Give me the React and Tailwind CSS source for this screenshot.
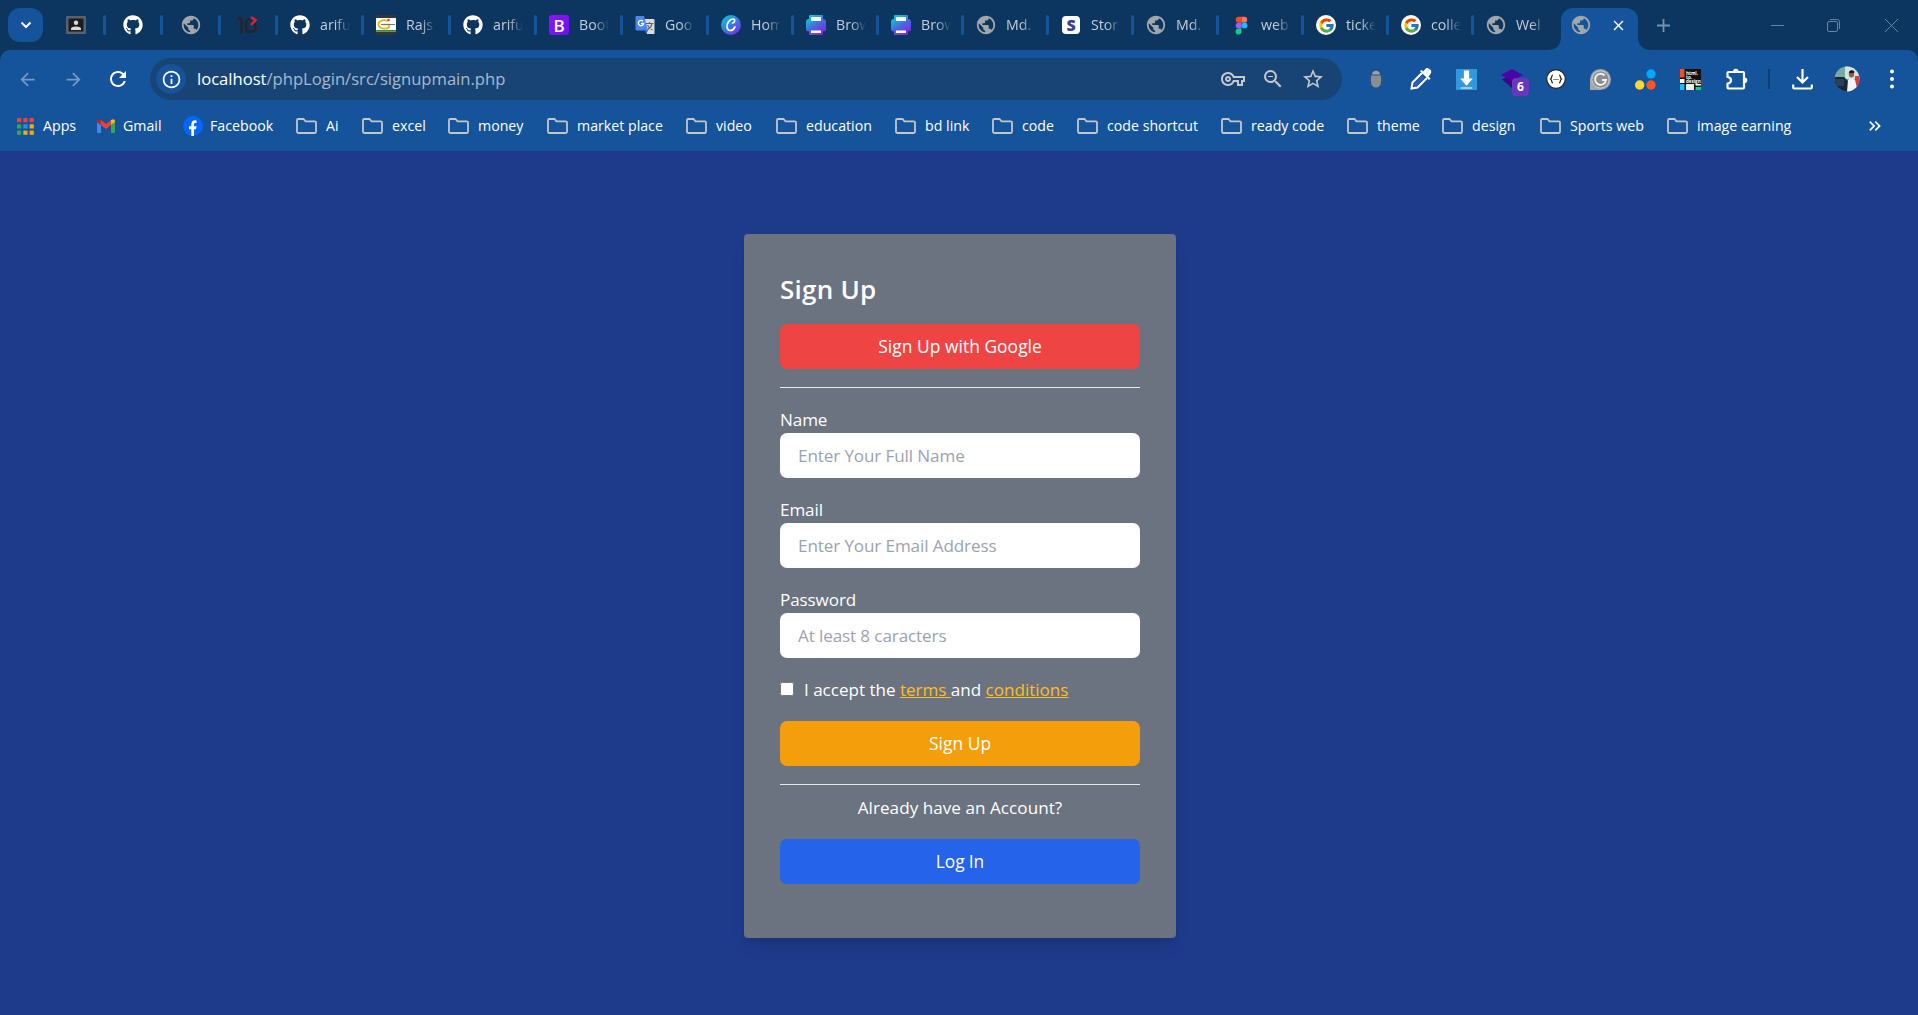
import React from "react";
import { FaGithub } from "react-icons/fa";
import { MdArrowBack, MdArrowForward, MdRefresh, MdOutlineInfo, MdPublic, MdOutlineVpnKey, MdZoomOut, MdStarOutline, MdClose, MdKeyboardDoubleArrowRight } from "react-icons/md";
import { FcGoogle } from "react-icons/fc";

const Globe = () => <MdPublic className="size-[22px] -m-px text-[#a1a6ab]" />;

const Github = () => <FaGithub className="size-5 text-white" />;

const Contact = () => (
  <svg viewBox="0 0 20 18" className="w-5 h-[18px]">
    <rect width="20" height="18" rx="1" fill="#5c6167" />
    <rect x="2.5" y="2.5" width="15" height="13" fill="#1b1d1f" />
    <circle cx="10" cy="6.7" r="2.2" fill="#d8d8d8" />
    <path d="M5 14v-1.2c0-3 10-3 10 0V14z" fill="#d8d8d8" />
  </svg>
);

const Ten = () => (
  <svg viewBox="0 0 20 20" className="size-5" fill="none">
    <path d="M0 3.500h3.500V18M12 3.500C8 5 8 7 8 9.500v4c0 4.500 9.500 4.500 9.500 0v-1.500c0-2-1.500-3.500-3-3.500" stroke="#242528" strokeWidth="2.600" />
    <path d="M13 2l4.500 3-4.500 5" stroke="#e8202d" strokeWidth="2.400" />
  </svg>
);

const Rajshahi = () => (
  <svg viewBox="0 0 20 20" className="size-5">
    <rect width="20" height="20" fill="#333638" />
    <rect y="3" width="20" height="13.500" fill="#fff" />
    <path d="M0 15h20v1.500H0z" fill="#2f8a3c" />
    <path d="M12 6C7 4 2 6 2.500 10s7 4.500 10.500 2.500V9.500H7" fill="none" stroke="#e3b516" strokeWidth="1.700" />
    <path d="M5 9.500h14" stroke="#777" strokeWidth="1" />
    <circle cx="12.500" cy="5" r="1.300" fill="#dd392c" />
  </svg>
);

const Bootstrap = () => (
  <span className="flex size-5 items-center justify-center rounded-[3px] bg-linear-to-br from-[#9013fe] to-[#6610f2] text-[17px] leading-none font-semibold text-white">B</span>
);

const Translate = () => (
  <svg viewBox="0 0 20 20" className="size-5">
    <path d="M8 4h10.500a1 1 0 0 1 1 1v14H12z" fill="#dcdcdc" />
    <path d="M10.500 8.500h8M14.500 7v1.500M17 9c-.8 3-2.500 4.500-5 6M12.500 10c1 2.500 2.500 4 5 5" stroke="#5d6468" strokeWidth="1.100" fill="none" />
    <path d="M1.500 1H9l4 14.500H1.500a1 1 0 0 1-1-1V2a1 1 0 0 1 1-1z" fill="#4a86ee" />
    <path d="M9.500 15.500h3.500L11 19z" fill="#2b57c4" />
    <path d="M8 6.200A2.700 2.700 0 1 0 8.700 8.500H6" stroke="#fff" strokeWidth="1.300" fill="none" />
  </svg>
);

const Canva = () => (
  <svg viewBox="0 0 20 20" className="size-5">
    <defs>
      <linearGradient id="canva" x1="0" y1="0" x2=".8" y2="1">
        <stop offset=".1" stopColor="#08c5cc" /><stop offset=".55" stopColor="#3c78e5" /><stop offset="1" stopColor="#7d2ae8" />
      </linearGradient>
    </defs>
    <circle cx="10" cy="10" r="10" fill="url(#canva)" />
    <path d="M11.500 8c2.500-.5 3-4 .5-4-3.500 0-6.500 4.500-6 8.200.6 4.500 5.500 4.300 8-.2" fill="none" stroke="#fff" strokeWidth="1.700" strokeLinecap="round" />
  </svg>
);

const Printer = () => (
  <svg viewBox="0 0 20 20" className="size-5">
    <defs>
      <linearGradient id="printer" x1=".1" y1="0" x2=".75" y2="1">
        <stop offset=".15" stopColor="#0fc4cd" /><stop offset=".55" stopColor="#4a67e4" /><stop offset="1" stopColor="#8a22e2" />
      </linearGradient>
    </defs>
    <path d="M4 0h12a1 1 0 0 1 1 1v3q3 0 3 3v7q0 2.500-3 2.500V19a1 1 0 0 1-1 1H4a1 1 0 0 1-1-1v-2.500Q0 16.500 0 14V7q0-3 3-3V1a1 1 0 0 1 1-1z" fill="url(#printer)" />
    <path d="M5 2h10v4H5zM5 15.500h10V18H5z" fill="#fff" />
  </svg>
);

const StorySet = () => (
  <span className="flex size-[18px] items-center justify-center rounded-[4px] bg-white text-[16px] leading-none font-extrabold text-[#3f3d9b]">S</span>
);

const Figma = () => (
  <svg viewBox="0 0 14 20" className="h-[19px] w-[13px]">
    <path d="M7 .5H4a3.200 3.200 0 0 0 0 6.400h3z" fill="#f24e1e" />
    <path d="M7 .5h3a3.200 3.200 0 0 1 0 6.400H7z" fill="#ff7262" />
    <path d="M7 6.900H4a3.200 3.200 0 0 0 0 6.400h3z" fill="#a259ff" />
    <circle cx="10.200" cy="10.100" r="3.200" fill="#1abcfe" />
    <path d="M7 13.300H4a3.200 3.200 0 1 0 3 3.200z" fill="#0acf83" />
  </svg>
);

const Google = () => (
  <span className="flex size-5 items-center justify-center rounded-full bg-white"><FcGoogle className="size-[17px]" /></span>
);

const pinned = [
  { icon: <Contact />, w: "w-[63px]" },
  { icon: <Github />, w: "w-[57px]" },
  { icon: <Globe />, w: "w-[58px]" },
  { icon: <Ten />, w: "w-[57px]" },
];

const tabs = [
  { icon: <Github />, label: "arifu", w: "w-[86px]" },
  { icon: <Rajshahi />, label: "Rajs", w: "w-[87px]" },
  { icon: <Github />, label: "arifu", w: "w-[86px]" },
  { icon: <Bootstrap />, label: "Boot", w: "w-[86px]" },
  { icon: <Translate />, label: "Goo", w: "w-[86px]" },
  { icon: <Canva />, label: "Hom", w: "w-[85px]" },
  { icon: <Printer />, label: "Brow", w: "w-[85px]" },
  { icon: <Printer />, label: "Brow", w: "w-[85px]" },
  { icon: <Globe />, label: "Md.", w: "w-[85px]" },
  { icon: <StorySet />, label: "Stor", w: "w-[85px]" },
  { icon: <Globe />, label: "Md.", w: "w-[85px]" },
  { icon: <Figma />, label: "web", w: "w-[85px]" },
  { icon: <Google />, label: "ticke", w: "w-[85px]" },
  { icon: <Google />, label: "colle", w: "w-[85px]" },
  { icon: <Globe />, label: "Wel", w: "w-[87px]", last: true },
];

const Divider = () => <span className="h-5 w-[3px] shrink-0 rounded-full bg-[#15539a]" />;

function TabStrip() {
  return (
    <div className="flex h-[50px] items-center bg-[#0c355f]">
      <div className="ml-2 flex h-[34px] w-[35px] shrink-0 items-center justify-center rounded-xl bg-[#15539a]">
        <svg viewBox="0 0 12 8" className="h-2 w-3" fill="none" stroke="#fff" strokeWidth="2"><path d="M1.500 1.500 6 6l4.500-4.500" /></svg>
      </div>
      {pinned.map((t, i) => (
        <div key={i} className={`flex shrink-0 items-center justify-end ${t.w}`}>
          <span className="mr-[17.500px] flex w-5 justify-center">{t.icon}</span>
          <Divider />
        </div>
      ))}
      {tabs.map((t, i) => (
        <div key={i} className={`flex shrink-0 items-center ${t.w}`}>
          <span className="ml-[12px] flex w-5 shrink-0 justify-center">{t.icon}</span>
          <span className="ml-[10px] w-[30px] shrink-0 overflow-hidden mask-r-from-50% mask-r-to-100% text-[14.200px] leading-5 whitespace-nowrap text-[#c3cedb]">{t.label}</span>
          {!t.last && <span className="ml-auto flex"><Divider /></span>}
        </div>
      ))}
      <div className="relative flex h-[42px] w-[77px] shrink-0 items-center self-end rounded-t-[12px] bg-[#15539a]">
        <svg viewBox="0 0 14 14" className="absolute bottom-0 -left-3.5 size-3.5"><path d="M14 0v14H0Q14 14 14 0z" fill="#15539a" /></svg>
        <svg viewBox="0 0 14 14" className="absolute -right-3.5 bottom-0 size-3.5"><path d="M0 0v14h14Q0 14 0 0z" fill="#15539a" /></svg>
        <span className="mb-1.5 ml-[10px] flex w-5 -translate-y-px justify-center"><Globe /></span>
        <MdClose className="mb-1.5 ml-[19px] size-[17px] -translate-y-px text-white" />
      </div>
      <svg viewBox="0 0 13 13" className="ml-[19px] size-[13px] shrink-0" stroke="#7892ae" strokeWidth="1.800"><path d="M6.500 0v13M0 6.500h13" /></svg>
      <svg viewBox="0 0 13 13" className="ml-auto size-[13px] shrink-0" stroke="#6785a6" fill="none"><path d="M0 6.500h13" /></svg>
      <svg viewBox="0 0 13 13" className="ml-[43px] size-[13px] shrink-0" stroke="#6785a6" fill="none"><rect x=".5" y="2.500" width="10" height="10" rx="1.500" /><path d="M3 .5h7.500a2 2 0 0 1 2 2V10" /></svg>
      <svg viewBox="0 0 13 13" className="mr-5 ml-[45px] size-[13px] shrink-0" stroke="#6785a6" fill="none"><path d="m0 0 13 13M13 0 0 13" /></svg>
    </div>
  );
}

function Extensions() {
  return (
    <div className="flex items-center">
      <svg viewBox="0 0 20 20" className="ml-6 size-5 shrink-0">
        <path d="m2 5.500 4 3M18 5.500l-4 3M1 11h18M3 17l4-3M17 17l-4-3" stroke="#3c5672" strokeWidth="1.200" />
        <path d="M6 5.500C6 .5 14 .5 14 5.500z" fill="#a0a0a0" />
        <path d="M5 6.500h10v6c0 8-10 8-10 0z" fill="#8b8e90" />
      </svg>
      <svg viewBox="0 0 22 22" className="ml-[24px] size-[22px] shrink-0">
        <path d="m4 18 9-9" stroke="#3559c8" strokeWidth="3" />
        <path d="M12 5 2.500 14.500 1.500 20.500l6-1L17 10" fill="none" stroke="#fff" strokeWidth="2" />
        <path d="m10 3 9 9 1.500-1.500-2-2 2-2.500q2-3-1-5t-4.500.5L13 3.500 11.500 2z" fill="#fff" />
      </svg>
      <svg viewBox="0 0 20 20" className="ml-[24px] size-[21px] shrink-0">
        <rect width="20" height="20" fill="#3398db" />
        <path d="M7.500 1.500h5V9H16l-6 7-6-7h3.500zM4.500 17.500h11v1h-11z" fill="#fff" />
      </svg>
      <div className="relative ml-[24px] size-[22px] shrink-0">
        <svg viewBox="0 0 22 22" className="size-[22px]"><path d="M11 1 22 7 11 13 0 7z" fill="#4b04a8" /><path d="M1 11.500 5 9.500l6 3.500v7z" fill="#39077f" /></svg>
        <span className="absolute top-[10px] left-[11px] flex h-[18px] w-[17px] items-center justify-center rounded-[4px] bg-[#6837bd] text-[12px] font-bold text-white">6</span>
      </div>
      <svg viewBox="0 0 20 20" className="ml-[23px] size-5 shrink-0">
        <circle cx="10" cy="10" r="9.300" fill="#fff" stroke="#252525" strokeWidth="1.200" />
        <path d="M7 6C5 6 6.500 9 4.500 10 6.500 11 5 14 7 14M13 6c2 0 .5 3 2.500 4-2 1-.5 4-2.500 4" fill="none" stroke="#222" strokeWidth="1.200" />
        <path d="M7.500 10.500h5" stroke="#222" strokeWidth="1.200" strokeDasharray="1 1" />
      </svg>
      <svg viewBox="0 0 21 21" className="ml-[24px] size-[21px] shrink-0">
        <path d="M0 21V10.500A10.500 10.500 0 1 1 10.500 21z" fill="#a4a7a9" />
        <circle cx="10.500" cy="10.500" r="8.600" fill="#8b8e91" stroke="#d5d5d5" strokeWidth=".8" />
        <path d="M14.500 6.500A5.500 5.500 0 1 0 16 11h-4" fill="none" stroke="#f3f3f3" strokeWidth="1.900" />
      </svg>
      <svg viewBox="0 0 21 21" className="ml-[24px] size-[21px] shrink-0">
        <circle cx="16" cy="5" r="4.700" fill="#05a5f8" /><circle cx="4.700" cy="16" r="4.700" fill="#fdd835" /><circle cx="16" cy="16" r="4.700" fill="#fc5722" />
      </svg>
      <div className="relative ml-[24px] flex size-[21px] shrink-0">
        <svg viewBox="0 0 21 21" className="size-[21px]">
          <rect width="21" height="21" fill="#111" /><rect x="0" y="0" width="4.500" height="8.500" fill="#f24e1e" /><rect y="10" width="4.500" height="4" fill="#fff" /><rect y="15" width="4.500" height="6" fill="#1abcfe" /><rect x="6" y="15" width="8" height="6" fill="#eee" /><rect x="15.500" y="15" width="5.500" height="1.500" fill="#fff" /><rect x="15.500" y="18" width="5.500" height="3" fill="#0acf83" />
        </svg>
        <span className="absolute top-[2px] left-[6px] text-[4.500px] leading-[4px] font-bold text-white">html.<br />to.<br />design</span>
      </div>
      <svg viewBox="0 0 22 22" className="ml-[25px] size-[22px] shrink-0">
        <path d="M2.500 4h14.500q1 0 1 1v14.500q0 1-1 1H2.500q-1 0-1-1v-4q3.500-.5 3.500-3.300t-3.500-3.200V5q0-1 1-1z" fill="none" stroke="#fff" strokeWidth="2.200" strokeLinejoin="round" />
        <path d="M7 3.500a2.800 2.800 0 0 1 5.600 0zM18.500 9.500a2.800 2.800 0 0 1 0 5.600z" fill="#fff" />
      </svg>
      <span className="ml-[20px] h-5 w-[2px] shrink-0 bg-[#0e3d70]" />
      <svg viewBox="0 0 21 21" className="ml-[22px] size-[21px] shrink-0" fill="none" stroke="#fff" strokeWidth="2.200"><path d="M10.500 0v13M5 8l5.500 5.500L16 8M1.200 15.500v3q0 1 1 1h16.600q1 0 1-1v-3" /></svg>
      <svg viewBox="0 0 26 26" className="ml-[21px] size-[26px] shrink-0">
        <defs><clipPath id="avatar"><circle cx="13" cy="13" r="12.500" /></clipPath></defs>
        <g clipPath="url(#avatar)">
          <rect width="26" height="26" fill="#78aaa5" /><path d="M11 0h15v13H11z" fill="#d6e2e0" /><path d="M21 10h5v11h-5z" fill="#d73945" />
          <path d="M0 11h10l4 4v11H0z" fill="#17283a" /><path d="M1 13h9v7H2z" fill="#27415c" />
          <path d="M14 14q3-3 7 0l3 12H13z" fill="#f1f5f6" /><ellipse cx="17.500" cy="8" rx="2.700" ry="3.400" fill="#8c5d42" /><path d="M14.800 7q.5-4 5.400-2v2z" fill="#151719" />
        </g>
      </svg>
      <svg viewBox="0 0 4 20" className="ml-[30px] h-5 w-1 shrink-0"><circle cx="2" cy="2.500" r="2" fill="#fff" /><circle cx="2" cy="10" r="2" fill="#fff" /><circle cx="2" cy="17.500" r="2" fill="#fff" /></svg>
    </div>
  );
}

function Toolbar() {
  return (
    <div className="flex h-[58px] items-center text-white">
      <MdArrowBack className="ml-[17px] size-[21px] shrink-0 text-[#7499c4]" />
      <MdArrowForward className="ml-[25px] size-[21px] shrink-0 text-[#7499c4]" />
      <MdRefresh className="ml-[22px] size-[24px] shrink-0" />
      <div className="ml-[20px] flex h-[42px] w-[1192px] shrink-0 items-center rounded-full bg-[#184475]">
        <span className="ml-[6px] flex size-[30px] items-center justify-center rounded-full bg-[#15539a]"><MdOutlineInfo className="size-[21px]" /></span>
        <span className="ml-[11px] text-[16.600px] text-[#a9b9cb]"><span className="text-white">localhost</span>/phpLogin/src/signupmain.php</span>
        <MdOutlineVpnKey className="ml-auto size-[24px] text-[#c5c8cc]" />
        <MdZoomOut className="ml-[16px] size-[24px] text-[#c5c8cc]" />
        <MdStarOutline className="mr-[17px] ml-[16px] size-[24px] text-[#c5c8cc]" />
      </div>
      <Extensions />
    </div>
  );
}

const Folder = () => (
  <svg viewBox="0 0 21 16" className="h-4 w-[21px]" fill="none" stroke="#c4c6c9" strokeWidth="1.800"><path d="M1 2.200Q1 1 2.200 1h5.300l2 2.300h9.300Q20 3.300 20 4.500v9.300q0 1.200-1.200 1.200H2.200Q1 15 1 13.800z" /></svg>
);

const AppsGrid = () => (
  <svg viewBox="0 0 17 17" className="size-[17px]">
    {["#f04336", "#f04336", "#f04336", "#34a853", "#2b8cf0", "#f9ab00", "#34a853", "#f9ab00", "#f9ab00"].map((c, i) => (
      <rect key={i} x={(i % 3) * 6.3} y={Math.floor(i / 3) * 6.3} width="4.200" height="4.200" fill={c} />
    ))}
  </svg>
);

const Gmail = () => (
  <svg viewBox="0 0 18 14" className="h-[14px] w-[18px]">
    <path d="M0 3v10q0 1 1 1h3V6z" fill="#4285f4" /><path d="M18 3v10q0 1-1 1h-3V6z" fill="#34a853" />
    <path d="M4 6V1l5 4 5-4v5L9 10z" fill="#ea4335" /><path d="M0 3V2q.5-3 4-1v5z" fill="#c5221f" /><path d="M18 3V2q-.5-3-4-1v5z" fill="#fbbc04" />
  </svg>
);

const Facebook = () => (
  <svg viewBox="0 0 20 20" className="size-5"><circle cx="10" cy="10" r="10" fill="#0866ff" /><path d="M8.300 20v-6.700H6V10.300h2.300V8.800c0-3.300 1.700-4.800 5.200-4.400v2.700c-2-.2-2.500.2-2.500 1.600v1.600h2.500l-.5 3H11V20z" fill="#fff" /></svg>
);

const bookmarks = [
  { label: "Apps", icon: <AppsGrid />, w: "w-[80px]", gap: "gap-[9px]" },
  { label: "Gmail", icon: <Gmail />, w: "w-[86px]", gap: "gap-[8px]" },
  { label: "Facebook", icon: <Facebook />, w: "w-[113px]", gap: "gap-[7px]" },
  { label: "Ai", w: "w-[66px]" },
  { label: "excel", w: "w-[86px]" },
  { label: "money", w: "w-[99px]" },
  { label: "market place", w: "w-[139px]" },
  { label: "video", w: "w-[90px]" },
  { label: "education", w: "w-[119px]" },
  { label: "bd link", w: "w-[97px]" },
  { label: "code", w: "w-[85px]" },
  { label: "code shortcut", w: "w-[144px]" },
  { label: "ready code", w: "w-[126px]" },
  { label: "theme", w: "w-[95px]" },
  { label: "design", w: "w-[98px]" },
  { label: "Sports web", w: "w-[127px]" },
  { label: "image earning", w: "w-[140px]" },
];

function BookmarkBar() {
  return (
    <div className="flex h-[43px] items-start pl-[17px] text-[14.200px] text-white">
      {bookmarks.map((b) => (
        <div key={b.label} className={`flex h-9 shrink-0 items-center whitespace-nowrap ${b.w} ${b.gap || "gap-[9px]"}`}>
          <span className="shrink-0">{b.icon || <Folder />}</span>
          <span>{b.label}</span>
        </div>
      ))}
      <MdKeyboardDoubleArrowRight className="mt-[8px] mr-[33px] ml-auto size-5" />
    </div>
  );
}

function Field({ label, placeholder, type }) {
  return (
    <label className="mb-[18px] block">
      <span className="block h-[27px] leading-[27px]">{label}</span>
      <input type={type} placeholder={placeholder} className="block h-[45px] w-full rounded-[7px] bg-white px-[18px] text-gray-900 placeholder:text-[#9ca3af]" />
    </label>
  );
}

function SignUpCard() {
  return (
    <form className="h-[704px] w-[432px] rounded-[4px] bg-[#6b7280] px-9 pt-9 text-[17.100px] tracking-[-0.12px] text-white shadow-lg">
      <h1 className="mb-[18px] h-9 text-[26px] leading-[38px] font-semibold tracking-[0.25px]">Sign Up</h1>
      <button type="button" className="block h-[45px] w-full rounded-[7px] bg-[#ef4444] text-[17.400px] tracking-[0.050px]">Sign Up with Google</button>
      <hr className="my-[18px] border-gray-200" />
      <Field label="Name" type="text" placeholder="Enter Your Full Name" />
      <Field label="Email" type="email" placeholder="Enter Your Email Address" />
      <Field label="Password" type="password" placeholder="At least 8 caracters" />
      <div className="mb-[18px] flex h-[27px] items-center tracking-[-0.030px]">
        <input type="checkbox" className="m-0 size-[14px] -translate-y-px" />
        <span className="ml-[10px]">I accept the <a className="text-[#fbbf24] underline">terms </a>and <a className="text-[#fbbf24] underline">conditions</a></span>
      </div>
      <button type="button" className="block h-[45px] w-full rounded-[7px] bg-[#f59e0b] text-[17.400px] tracking-[0.050px]">Sign Up</button>
      <hr className="mt-[18px] mb-[9px] border-gray-200" />
      <p className="mb-[18px] h-[27px] text-center leading-[27px] tracking-[0.040px]">Already have an Account?</p>
      <button type="button" className="block h-[45px] w-full rounded-[7px] bg-[#2563eb] text-[17.400px]">Log In</button>
    </form>
  );
}

export default function App() {
  return (
    <div className="flex h-[1015px] w-[1918px] flex-col overflow-hidden bg-[#1e3a8a] font-['Open_Sans',sans-serif]">
      <header className="shrink-0 bg-[#0c355f]">
        <TabStrip />
        <div className="rounded-t-[10px] bg-[#15539a]">
          <Toolbar />
          <BookmarkBar />
        </div>
      </header>
      <main className="flex flex-1 justify-center pt-[83px] pl-[2px]">
        <SignUpCard />
      </main>
    </div>
  );
}
